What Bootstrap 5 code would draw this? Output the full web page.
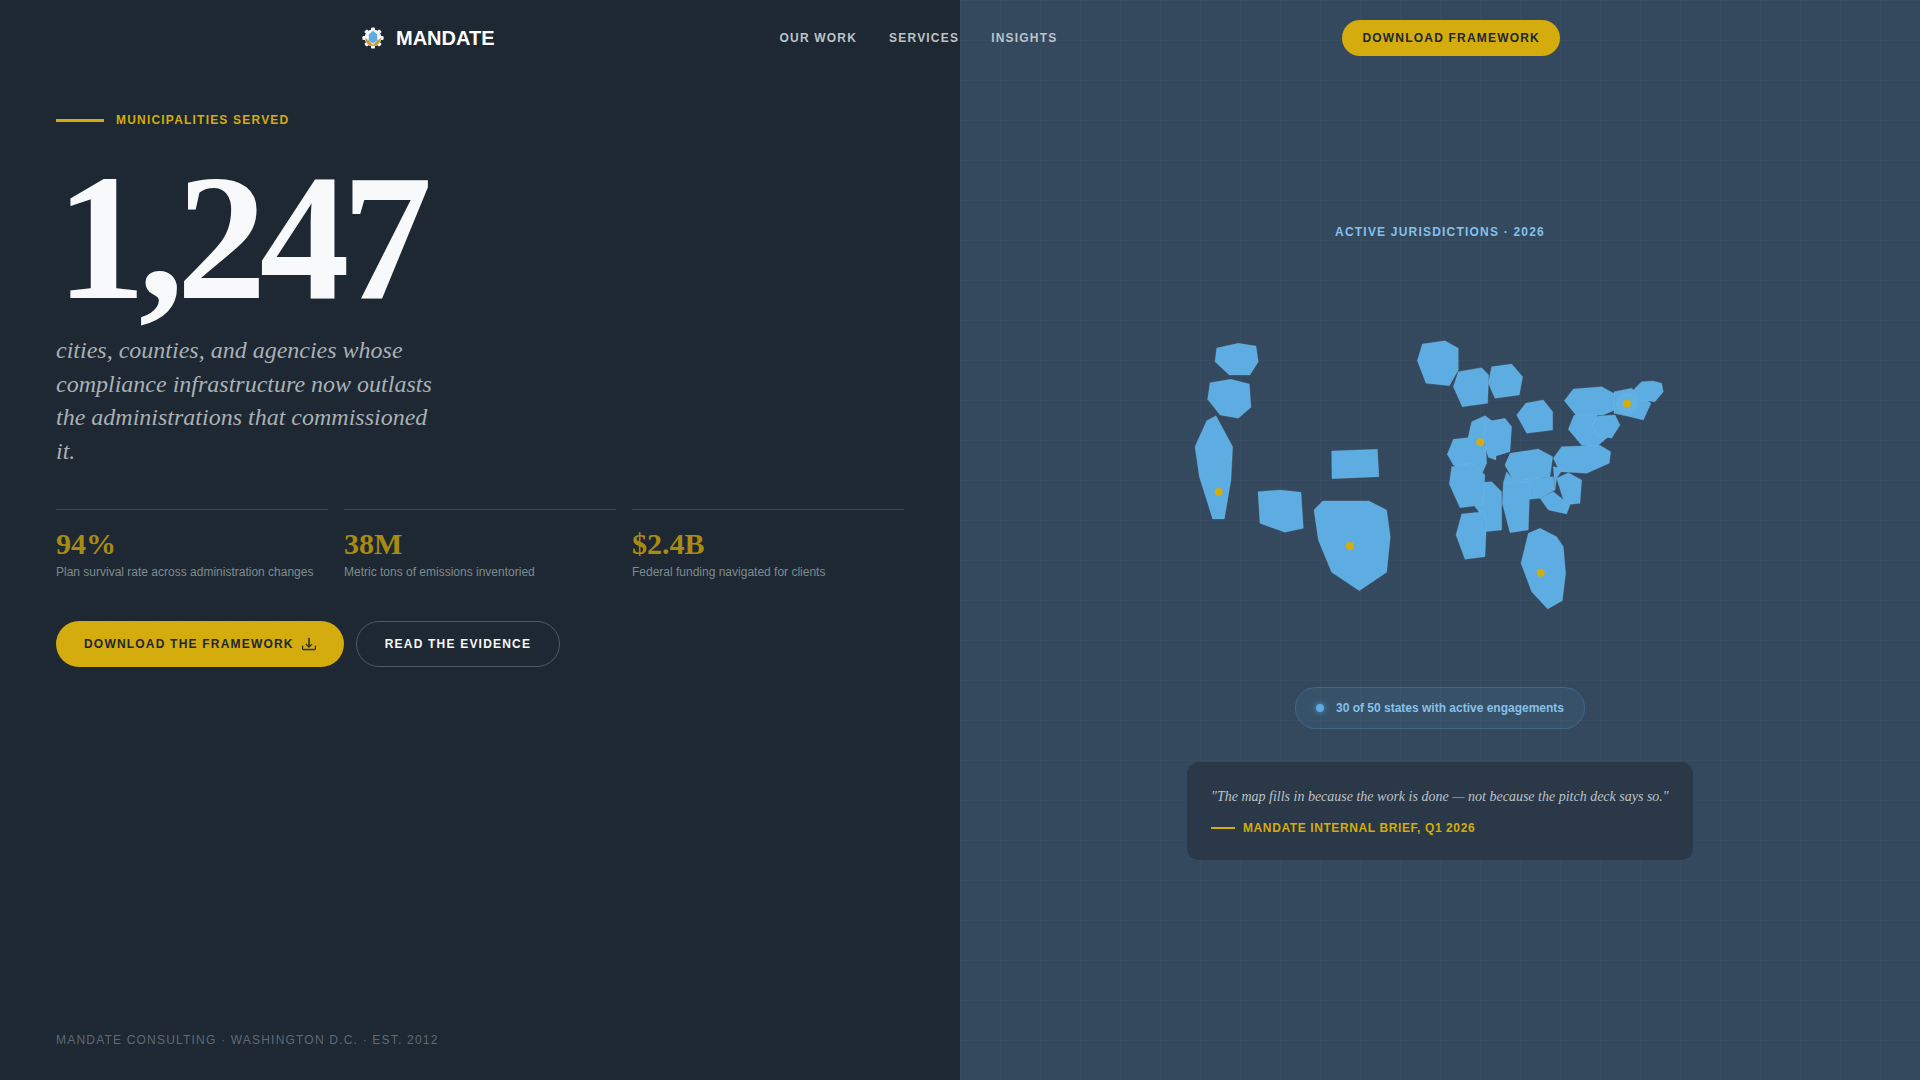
<!DOCTYPE html>
<html lang="en">
<head>
    <meta charset="UTF-8">
    <meta name="viewport" content="width=device-width, initial-scale=1.0">
    <title>Mandate Consulting</title>
    <link href="https://cdn.jsdelivr.net/npm/bootstrap@5.3.3/dist/css/bootstrap.min.css" rel="stylesheet">
    <style>
        body {
            font-family: "Liberation Sans", Arial, sans-serif;
            background-color: #1d2832;
            overflow: hidden;
        }
        .page { height: 1080px; }
        .panel-left {
            width: 960px;
            padding: 110px 56px 31px;
            background-color: #1d2832;
            background-image: radial-gradient(rgba(255,255,255,.008) 1px, transparent 1px);
            background-size: 3px 3px;
        }
        .panel-right {
            width: 960px;
            padding-top: 4px;
            background-color: #34495e;
            background-image:
                linear-gradient(rgba(255,255,255,.025) 1px, transparent 1px),
                linear-gradient(90deg, rgba(255,255,255,.025) 1px, transparent 1px);
            background-size: 40px 40px;
        }
        .top-nav { top: 20px; left: 360px; width: 1200px; z-index: 5; }
        .brand { font-size: 20px; font-weight: 700; color: #fff; text-decoration: none; column-gap: 10px; }
        .nav-links { column-gap: 32px; }
        .nav-links a {
            font-size: 12px; font-weight: 700; letter-spacing: 1.2px; color: #bdc3c7; text-decoration: none;
        }
        .btn-gold {
            background-color: #d4ac0d; color: #1c2833; border: 0; font-weight: 700; font-size: 12px; letter-spacing: 1.2px;
        }
        .btn-gold:hover { background-color: #d4ac0d; color: #1c2833; }
        .nav-cta { height: 36px; padding: 0 20px; }
        .eyebrow-row { column-gap: 12px; }
        .eyebrow { font-size: 12px; font-weight: 700; letter-spacing: 1.2px; color: #d4ac0d; line-height: 20px; }
        .eyebrow-line { width: 48px; height: 3px; background-color: #d4ac0d; }
        .big-number {
            font-family: "Liberation Serif", "Times New Roman", serif;
            font-size: 180px; font-weight: 700; line-height: 1; letter-spacing: -7.2px; color: #f8f9fa;
            margin: 18px 0 6px;
        }
        .lede {
            font-family: "Liberation Serif", "Times New Roman", serif;
            font-style: italic; font-size: 24px; line-height: 33.6px; color: #aab0b5;
            max-width: 380px; margin-bottom: 1px;
        }
        .stat { border-top: 1px solid #34495e; padding-top: 15px; }
        .stat-value {
            font-family: "Liberation Serif", "Times New Roman", serif;
            font-size: 30px; font-weight: 700; line-height: 38px; color: #a98a13;
        }
        .stat-label { font-size: 12px; line-height: 18px; color: #7f8c8d; }
        .hero-actions { column-gap: 12px; margin-top: 40px; }
        .btn-hero { height: 46px; padding: 0 28px; }
        .btn-ghost {
            background: transparent; border: 1px solid #4a5a6a; color: #f8f9fa; font-weight: 700; font-size: 12px; letter-spacing: 1.2px;
        }
        .btn-ghost:hover { background: transparent; color: #f8f9fa; border-color: #4a5a6a; }
        .foot-note { font-size: 12px; letter-spacing: 1.2px; color: #5f6a75; }
        .map-title { font-size: 12px; font-weight: 700; letter-spacing: 1.2px; color: #85c1e9; line-height: 14px; margin-top: 1px; }
        .map-svg { display: block; width: 560px; height: 300px; margin: 81px 0 67px; }
        .map-svg polygon { fill: #5dade2; stroke: rgba(133,193,233,.75); stroke-width: 1; stroke-linejoin: round; }
        .map-svg circle { fill: #d4ac0d; }
        .status-pill {
            height: 42px; width: 290px; border: 1px solid rgba(93,173,226,.25); background-color: rgba(93,173,226,.08);
            font-size: 12px; font-weight: 700; color: #85c1e9; margin-bottom: 33px;
        }
        .status-dot { width: 8px; height: 8px; background-color: #5dade2; box-shadow: 0 0 6px 1px rgba(93,173,226,.6); }
        .quote-card { width: 506px; height: 98px; padding: 24px; background-color: #2a3847; border-radius: 12px; }
        .quote-text {
            font-family: "Liberation Serif", "Times New Roman", serif;
            font-style: italic; font-size: 14px; line-height: 22px; color: #bdc3c7; white-space: nowrap;
        }
        .quote-cite { font-size: 12px; font-weight: 700; letter-spacing: .6px; color: #d4ac0d; line-height: 16px; }
        .cite-row { margin-top: 12px; }
        .cite-line { width: 24px; height: 2px; background-color: #d4ac0d; }
    </style>
</head>
<body>
    <div class="page d-flex position-relative">
        <nav class="top-nav position-absolute d-flex align-items-center justify-content-between">
            <a href="#" class="brand d-flex align-items-center">
                <svg width="26" height="26" viewBox="-1 -1 26 26" aria-hidden="true">
                    <g fill="#f4f6f7">
                        <circle cx="12" cy="12" r="8.4"/>
                        <rect x="10" y="1.4" width="4" height="21.2" rx="1.2"/>
                        <rect x="1.4" y="10" width="21.2" height="4" rx="1.2"/>
                        <rect x="10" y="1.4" width="4" height="21.2" rx="1.2" transform="rotate(45 12 12)"/>
                        <rect x="10" y="1.4" width="4" height="21.2" rx="1.2" transform="rotate(-45 12 12)"/>
                    </g>
                    <path d="M4 12 A8 8 0 0 0 20 12 L16.2 14.5 L12 19 L7.8 14.5 Z" fill="#c99a2e"/>
                    <path d="M12 4.8 L16.2 8.4 L16.2 14.5 L12 17.6 L7.8 14.5 L7.8 8.4 Z" fill="#5dade2"/>
                </svg>
                MANDATE
            </a>
            <div class="nav-links d-flex">
                <a href="#">OUR WORK</a>
                <a href="#">SERVICES</a>
                <a href="#">INSIGHTS</a>
            </div>
            <button class="btn btn-gold nav-cta rounded-pill">DOWNLOAD FRAMEWORK</button>
        </nav>

        <section class="panel-left d-flex flex-column">
            <div class="eyebrow-row d-flex align-items-center">
                <span class="eyebrow-line"></span>
                <span class="eyebrow">MUNICIPALITIES SERVED</span>
            </div>
            <div class="big-number">1,247</div>
            <p class="lede">cities, counties, and agencies whose compliance infrastructure now outlasts the administrations that commissioned it.</p>
            <div class="row g-3 mt-4">
                <div class="col-4"><div class="stat">
                    <div class="stat-value">94%</div>
                    <div class="stat-label">Plan survival rate across administration changes</div>
                </div></div>
                <div class="col-4"><div class="stat">
                    <div class="stat-value">38M</div>
                    <div class="stat-label">Metric tons of emissions inventoried</div>
                </div></div>
                <div class="col-4"><div class="stat">
                    <div class="stat-value">$2.4B</div>
                    <div class="stat-label">Federal funding navigated for clients</div>
                </div></div>
            </div>
            <div class="hero-actions d-flex">
                <button class="btn btn-gold btn-hero rounded-pill d-flex align-items-center gap-2">
                    DOWNLOAD THE FRAMEWORK
                    <svg width="14" height="14" viewBox="0 0 16 16" fill="currentColor" aria-hidden="true">
                        <path d="M.5 9.9a.5.5 0 0 1 .5.5v2.5a1 1 0 0 0 1 1h12a1 1 0 0 0 1-1v-2.5a.5.5 0 0 1 1 0v2.5a2 2 0 0 1-2 2H2a2 2 0 0 1-2-2v-2.5a.5.5 0 0 1 .5-.5z" stroke="currentColor" stroke-width=".6"/>
                        <path d="M7.65 11.85a.5.5 0 0 0 .7 0l3-3a.5.5 0 0 0-.7-.7L8.5 10.29V1.5a.5.5 0 0 0-1 0v8.79L5.35 8.15a.5.5 0 1 0-.7.7l3 3z" stroke="currentColor" stroke-width=".6"/>
                    </svg>
                </button>
                <button class="btn btn-ghost btn-hero rounded-pill">READ THE EVIDENCE</button>
            </div>
            <div class="foot-note mt-auto">MANDATE CONSULTING · WASHINGTON D.C. · EST. 2012</div>
        </section>

        <section class="panel-right d-flex flex-column align-items-center justify-content-center">
            <div class="map-title">ACTIVE JURISDICTIONS · 2026</div>
            <svg class="map-svg" viewBox="1160 320 560 300" aria-label="Map of active states">
                <g transform="translate(1170 320) scale(.3333)">
                    <polygon points="140,84 205,70 258,78 265,125 240,165 178,165 135,125"/>
                    <polygon points="120,188 182,178 238,192 243,262 205,295 150,285 113,238"/>
                    <polygon points="110,302 138,287 188,380 183,480 163,597 128,597 88,470 75,380"/>
                    <polygon points="264,515 330,510 393,517 400,625 345,637 270,610"/>
                    <polygon points="485,393 622,388 627,470 486,476"/>
                    <polygon points="432,570 458,543 597,543 650,570 661,650 650,757 568,812 485,757 445,660"/>
                </g>
                <g transform="translate(1390 320) scale(.3333)">
                    <polygon points="97,72 165,62 205,85 205,150 178,197 108,190 82,122"/>
                    <polygon points="205,155 275,143 296,165 293,250 217,260 190,200"/>
                    <polygon points="305,140 365,132 398,170 388,225 315,235 295,190"/>
                    <polygon points="407,250 460,240 488,275 488,330 410,340 380,285"/>
                    <polygon points="550,207 635,200 675,222 675,270 640,285 560,288 523,242"/>
                    <polygon points="552,286 620,284 655,350 620,380 575,376 535,328"/>
                    <polygon points="625,288 675,285 690,315 665,355 620,345 607,315"/>
                    <polygon points="672,215 725,205 745,225 783,250 760,300 720,290 672,280"/>
                    <polygon points="755,185 790,183 815,190 820,215 795,245 745,240 730,210"/>
                    <polygon points="515,380 630,376 662,395 658,430 590,460 510,455 490,415"/>
                    <polygon points="232,362 245,305 285,287 310,305 295,372"/>
                    <polygon points="290,305 345,295 365,320 360,395 318,408 318,420 295,412 280,360"/>
                    <polygon points="172,403 190,358 260,350 288,380 290,430 272,470 190,435"/>
                    <polygon points="255,560 280,487 305,485 335,515 335,630 285,635 270,580"/>
                    <polygon points="185,440 245,430 285,465 278,555 210,563 178,492"/>
                    <polygon points="215,582 280,575 290,600 285,710 225,718 198,645"/>
                    <polygon points="350,455 370,480 490,470 495,510 450,535 420,538 340,488"/>
                    <polygon points="360,400 445,387 488,410 480,470 370,482 345,435"/>
                    <polygon points="340,490 420,485 415,630 360,638 337,550"/>
                    <polygon points="450,535 490,515 540,555 530,582 475,570"/>
                    <polygon points="490,440 520,445 500,475 495,510"/>
                    <polygon points="500,475 535,458 575,480 570,550 525,555"/>
                    <polygon points="415,640 450,625 500,650 520,680 527,760 517,842 473,867 425,815 393,730"/>
                </g>
                <circle cx="1218.7" cy="492" r="4"/>
                <circle cx="1350" cy="546" r="4"/>
                <circle cx="1480.3" cy="442.3" r="4"/>
                <circle cx="1627" cy="403.7" r="11" style="fill:#85c1e9;opacity:.15"/>
                <circle cx="1627" cy="403.7" r="4"/>
                <circle cx="1540.7" cy="572.7" r="4"/>
            </svg>
            <div class="status-pill rounded-pill d-flex align-items-center justify-content-center gap-2">
                <span class="status-dot rounded-circle"></span>
                <span class="ms-1">30 of 50 states with active engagements</span>
            </div>
            <div class="quote-card">
                <div class="quote-text">"The map fills in because the work is done — not because the pitch deck says so."</div>
                <div class="cite-row d-flex align-items-center gap-2">
                    <span class="cite-line"></span>
                    <span class="quote-cite">MANDATE INTERNAL BRIEF, Q1 2026</span>
                </div>
            </div>
        </section>
    </div>
    <script src="https://cdn.jsdelivr.net/npm/bootstrap@5.3.3/dist/js/bootstrap.bundle.min.js"></script>
</body>
</html>
